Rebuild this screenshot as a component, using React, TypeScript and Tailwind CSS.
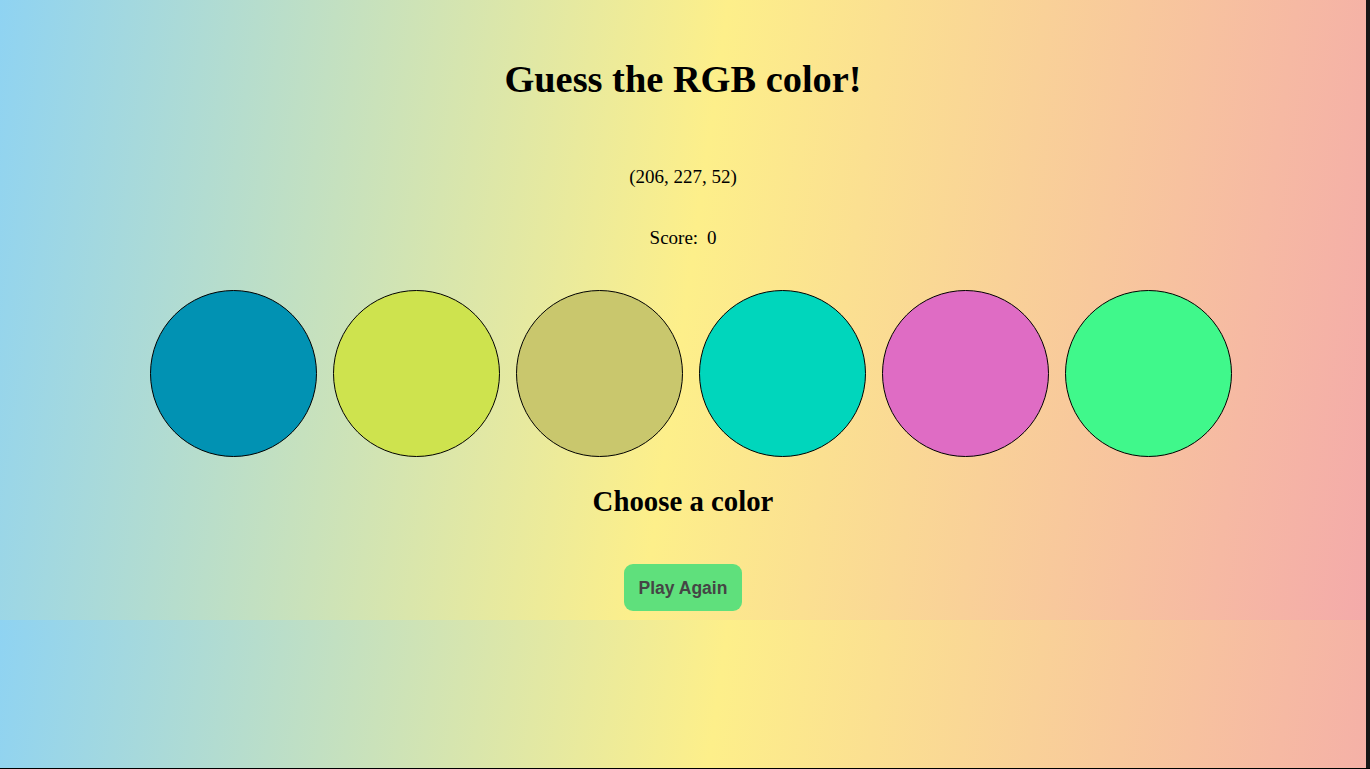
const circles = [
  "bg-[#0192b3]",
  "bg-[rgb(206,227,78)]",
  "bg-[#c9c76d]",
  "bg-[#00d6bc]",
  "bg-[#df6cc4]",
  "bg-[#40f88b]",
];

export default function App() {
  return (
    <div className="flex h-screen border-b border-black bg-[linear-gradient(98deg,#8fd3f2,#fdef8a,#f4aaaa)] bg-[length:100%_620px] font-['Liberation_Serif',serif] text-black">
      <div className="flex flex-1 flex-col items-center">
        <h1 className="mt-[57px] text-[38.4px] font-bold leading-[44px]">
          Guess the RGB color!
        </h1>
        <p className="mt-[65px] text-[19px] leading-[22px]">(206, 227, 52)</p>
        <p className="mt-[39px] text-[19px] leading-[22px]">
          Score:&nbsp;<span className="ml-[4px]">0</span>
        </p>
        <div className="mt-[41px] flex gap-[16px] pl-[16px]">
          {circles.map((c, i) => (
            <div
              key={i}
              className={`h-[167px] w-[167px] rounded-full border border-black ${c}`}
            />
          ))}
        </div>
        <h2 className="mt-[28px] text-[28.8px] font-bold leading-[33px]">
          Choose a color
        </h2>
        <button className="mt-[46px] h-[47px] w-[118px] rounded-[9px] bg-[#5fe07c] pt-[1px] font-['Liberation_Sans',Arial,sans-serif] text-[17.5px] font-bold text-[#454545]">
          Play Again
        </button>
      </div>
      <div className="w-1 bg-[#161616]" />
    </div>
  );
}
